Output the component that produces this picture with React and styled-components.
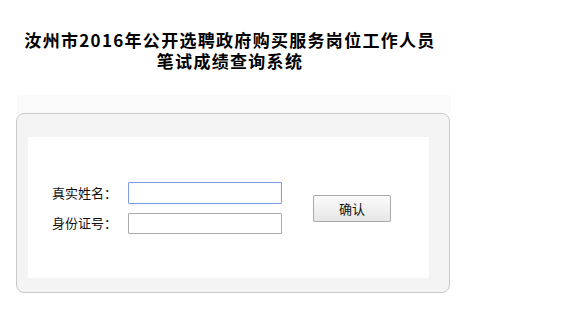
import React from "react";
import styled, { createGlobalStyle } from "styled-components";

const GlobalStyle = createGlobalStyle`
  body {
    margin: 0;
    background: #ffffff;
    font-family: "Liberation Sans", "Noto Sans CJK SC", sans-serif;
  }
`;

const Page = styled.div`
  width: 566px;
  height: 316px;
  overflow: hidden;
`;

const Title = styled.h1`
  width: 460px;
  margin: 0;
  padding-top: 29px;
  text-align: center;
  font-family: "Noto Sans CJK SC", sans-serif;
  font-size: 17px;
  font-weight: 700;
  letter-spacing: 1.3px;
  color: #000;
`;

const TitleLine = styled.span`
  display: block;
  height: 21px;
  line-height: 21px;
`;

const Band = styled.div`
  width: 434px;
  height: 18px;
  margin: 24px 0 0 17px;
  background: #fafafa;
`;

const Box = styled.div`
  box-sizing: border-box;
  width: 434px;
  height: 180px;
  margin-left: 16px;
  padding: 23px 20px 13px 11px;
  border: 1px solid #c9c9c9;
  border-radius: 8px;
  background: #f4f4f4;
`;

const Inner = styled.div`
  height: 141px;
  box-sizing: border-box;
  padding: 45px 0 0 24px;
  background: #fff;
`;

const Form = styled.div`
  display: flex;
  align-items: center;
  gap: 31px;
`;

const Fields = styled.div`
  display: grid;
  grid-template-columns: 76px 154px;
  row-gap: 8px;
  align-items: center;
`;

const Label = styled.label`
  font-family: "Noto Sans CJK SC", sans-serif;
  font-size: 13px;
  color: #111;
  line-height: 22px;
`;

const Input = styled.input`
  display: block;
  box-sizing: border-box;
  width: 154px;
  height: ${(p) => (p.$focus ? 22 : 21)}px;
  margin: 0;
  padding: 0 3px;
  border: 1px solid ${(p) => (p.$focus ? "#7f9de0" : "#a9a9a9")};
  box-shadow: ${(p) => (p.$focus ? "inset 0 0 1px #b8cbf2" : "none")};
  border-radius: 1px;
  background: #fff;
  outline: none;
`;

const Button = styled.button`
  box-sizing: border-box;
  width: 78px;
  height: 27px;
  border: 1px solid #a8a8a8;
  border-radius: 2px;
  background: linear-gradient(#fbfbfb, #e6e6e6);
  font-family: "Noto Sans CJK SC", sans-serif;
  font-size: 13px;
  color: #111;
  padding: 0;
`;

export default function App() {
  return (
    <Page>
      <GlobalStyle />
      <Title>
        <TitleLine>汝州市2016年公开选聘政府购买服务岗位工作人员</TitleLine>
        <TitleLine>笔试成绩查询系统</TitleLine>
      </Title>
      <Band />
      <Box>
        <Inner>
          <Form>
            <Fields>
              <Label>真实姓名：</Label>
              <Input $focus />
              <Label>身份证号：</Label>
              <Input />
            </Fields>
            <Button>确认</Button>
          </Form>
        </Inner>
      </Box>
    </Page>
  );
}
